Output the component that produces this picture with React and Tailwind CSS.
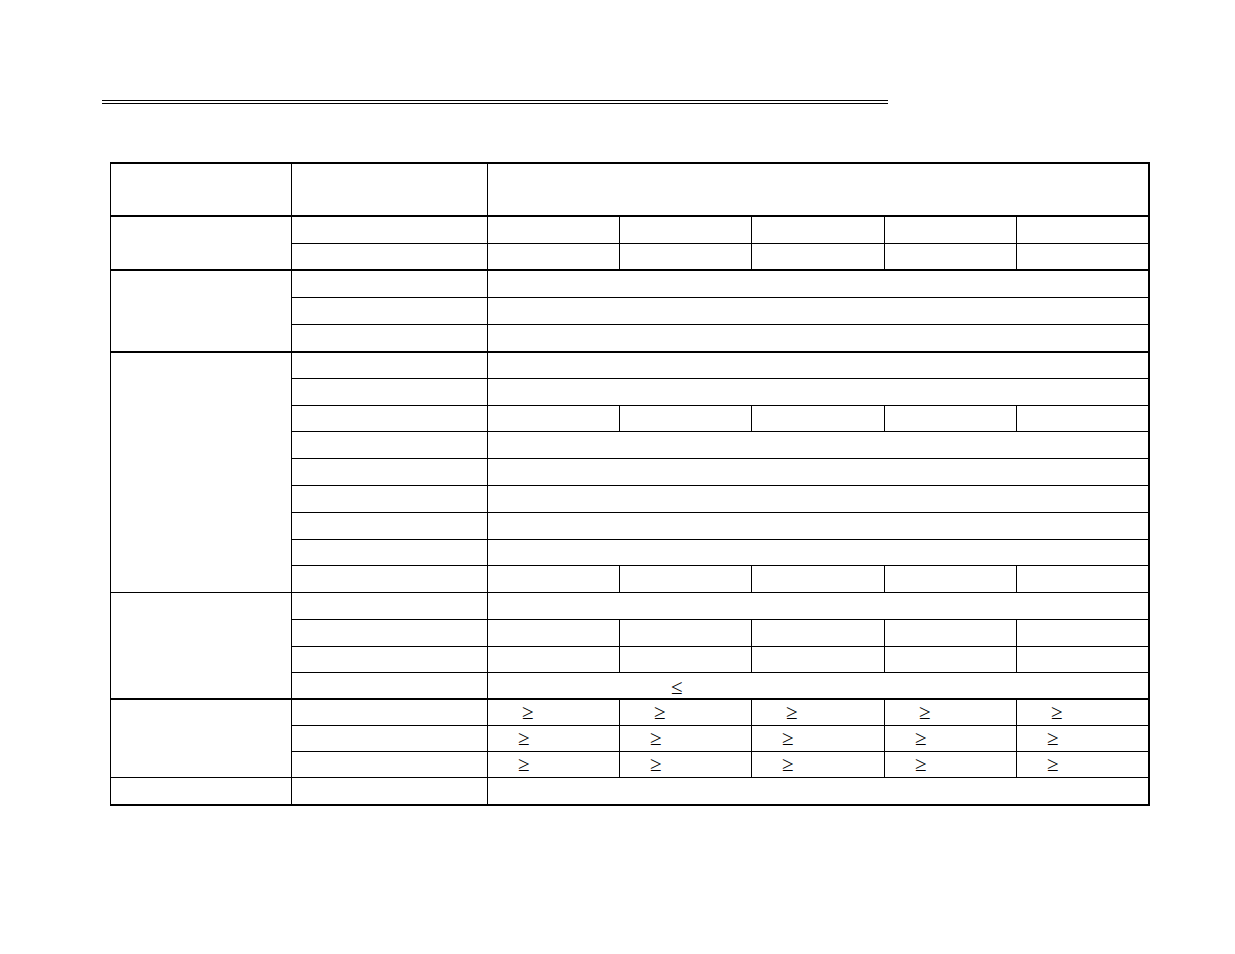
const SUB_WIDTHS = ['w-[132px]', 'w-[132px]', 'w-[133px]', 'w-[132px]', 'flex-1']

// each group: left cell spans all its rows; rows carry their own height (incl. bottom rule)
const GROUPS = [
  { edge: 'border-b-2', rows: [{ h: 'h-[51px]' }] },
  { edge: 'border-b-2', rows: [{ h: 'h-[27px]', split: true }, { h: 'h-[25px]', split: true }] },
  { edge: 'border-b-2', rows: [{ h: 'h-[27px]' }, { h: 'h-[27px]' }, { h: 'h-[26px]' }] },
  {
    edge: 'border-b',
    rows: [
      { h: 'h-[26px]' },
      { h: 'h-[27px]' },
      { h: 'h-[26px]', split: true },
      { h: 'h-[27px]' },
      { h: 'h-[27px]' },
      { h: 'h-[27px]' },
      { h: 'h-[27px]' },
      { h: 'h-[26px]' },
      { h: 'h-[26px]', split: true },
    ],
  },
  {
    edge: 'border-b-2',
    rows: [
      { h: 'h-[27px]' },
      { h: 'h-[27px]', split: true },
      { h: 'h-[26px]', split: true },
      { h: 'h-[25px]', mark: 'le' },
    ],
  },
  {
    edge: 'border-b',
    rows: [
      { h: 'h-[26px]', split: true, mark: 'ge', pad: 'pl-[34px] pt-[2px]' },
      { h: 'h-[26px]', split: true, mark: 'ge', pad: 'pl-[30px] pt-[2px]' },
      { h: 'h-[25px]', split: true, mark: 'ge', pad: 'pl-[30px] pt-[2px]' },
    ],
  },
  { edge: '', rows: [{ h: 'h-[26px]' }] },
]

export default function App() {
  return (
    <div className="min-h-screen bg-white pt-[100px] font-['Liberation_Serif','Times_New_Roman',serif] text-black">
      <div className="ml-[102px] h-[4px] w-[786px] border-y border-black" />

      <div className="ml-[110px] mt-[58px] w-[1040px] border-l border-r-2 border-t-2 border-b-2 border-black">
        {GROUPS.map((group, gi) => (
          <div key={gi} className={`flex border-black ${group.edge}`}>
            <div className="w-[181px] shrink-0 border-r border-black" />
            <div className="flex flex-1 flex-col">
              {group.rows.map((row, ri) => (
                <Row key={ri} row={row} last={ri === group.rows.length - 1} />
              ))}
            </div>
          </div>
        ))}
      </div>
    </div>
  )
}

function Row({ row, last }) {
  return (
    <div className={`flex border-black ${row.h} ${last ? '' : 'border-b'}`}>
      <div className="w-[196px] shrink-0 border-r border-black" />
      {row.split ? (
        <div className="flex flex-1">
          {SUB_WIDTHS.map((w, i) => (
            <div key={i} className={`${w} ${i < 4 ? 'border-r' : ''} border-black ${row.pad || ''}`}>
              {row.mark === 'ge' && <span className="text-[21px] leading-none">≥</span>}
            </div>
          ))}
        </div>
      ) : (
        <div className="flex-1 pl-[183px] pt-[4px]">
          {row.mark === 'le' && <span className="text-[21px] leading-none">≤</span>}
        </div>
      )}
    </div>
  )
}
